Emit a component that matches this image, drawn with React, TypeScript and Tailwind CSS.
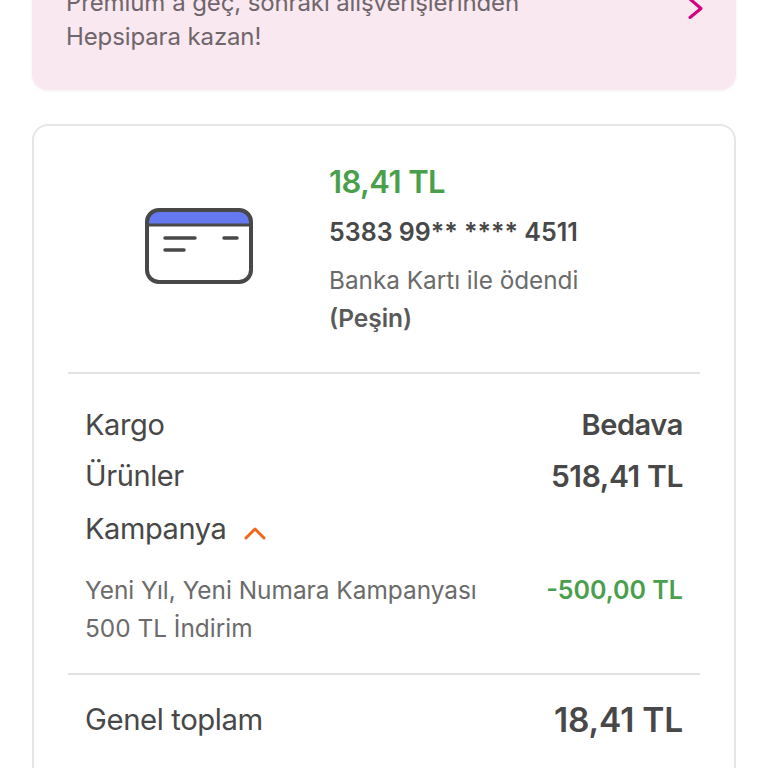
export default function App() {
  return (
    <div className="h-[768px] overflow-hidden bg-white font-['Inter',sans-serif] text-[#484848]">
      <div className="mx-8 -mt-[14px] flex h-[104px] justify-between rounded-b-2xl bg-[#f9e8ef] pl-[34px] pr-[32px] shadow-[0_1px_3px_rgba(0,0,0,0.06)]">
        <p className="text-[24px] leading-[34px] tracking-[-0.12px] text-[#6f666b]">
          <span className="block">Premium'a geç, sonraki alışverişlerinden</span>
          <span className="block">Hepsipara kazan!</span>
        </p>
        <svg className="mt-[11px]" width="16" height="22" viewBox="0 0 16 22" fill="none">
          <path d="M2 2l11 9.500-11 9" stroke="#d5007f" strokeWidth="3" strokeLinecap="round" strokeLinejoin="round" />
        </svg>
      </div>

      <div className="mx-8 mt-[34px] rounded-2xl border-2 border-[#e6e6e6] px-[34px] pb-[60px]">
        <div className="flex border-b-2 border-[#e3e3e3] pb-[35px]">
          <div className="flex w-[261px] justify-center pt-[81px]">
            <svg width="108" height="78" viewBox="0 0 108 78" fill="none">
              <path d="M2 15a12 12 0 0 1 12-12h80a12 12 0 0 1 12 12v3H2z" fill="#6479ef" />
              <rect x="2" y="3" width="104" height="72" rx="12" stroke="#484848" strokeWidth="4" />
              <path d="M2 18h104" stroke="#484848" strokeWidth="3" />
              <path d="M20 31h30M79 31h13M20 43h19" stroke="#484848" strokeWidth="3.500" strokeLinecap="round" />
            </svg>
          </div>
          <div className="pt-[37px]">
            <div className="text-[31px] leading-[38px] font-semibold tracking-[-0.6px] text-[#4a9f4d]">18,41 TL</div>
            <div className="mt-[12px] text-[25px] leading-[38px] font-semibold">5383 99** **** 4511</div>
            <div className="mt-[10px] text-[24.300px] leading-[38px] text-[#6b6b6b]">Banka Kartı ile ödendi</div>
            <div className="text-[24.500px] leading-[38px] font-semibold text-[#5a5a5a]">(Peşin)</div>
          </div>
        </div>
        <div className="px-[17px] pt-[31px] pb-[26px]">
          <div className="flex justify-between text-[29px] leading-[40px] tracking-[-0.4px]">
            <span>Kargo</span>
            <span className="font-semibold">Bedava</span>
          </div>
          <div className="mt-[11px] flex justify-between text-[29px] leading-[40px] tracking-[-0.4px]">
            <span>Ürünler</span>
            <span className="text-[30px] font-semibold">518,41 TL</span>
          </div>
          <div className="mt-[13px] flex items-center gap-[18px] text-[29px] leading-[40px] tracking-[-0.4px]">
            <span>Kampanya</span>
            <svg className="mt-[8px]" width="22" height="14" viewBox="0 0 22 14" fill="none">
              <path d="M2 12l9-9 9 9" stroke="#f0671c" strokeWidth="3" strokeLinecap="round" strokeLinejoin="round" />
            </svg>
          </div>
          <div className="mt-[22px] flex justify-between text-[24.400px] leading-[38px]">
            <span className="text-[#6b6b6b]">
              Yeni Yıl, Yeni Numara Kampanyası
              <br />
              500 TL İndirim
            </span>
            <span className="text-[25px] font-semibold text-[#4a9f4d]">-500,00 TL</span>
          </div>
        </div>
        <div className="flex items-center justify-between border-t-2 border-[#e3e3e3] px-[17px] pt-[24px]">
          <span className="text-[29.300px] leading-[42px] tracking-[-0.4px]">Genel toplam</span>
          <span className="text-[33.500px] leading-[42px] font-semibold tracking-[-0.2px]">18,41 TL</span>
        </div>
      </div>
    </div>
  );
}
